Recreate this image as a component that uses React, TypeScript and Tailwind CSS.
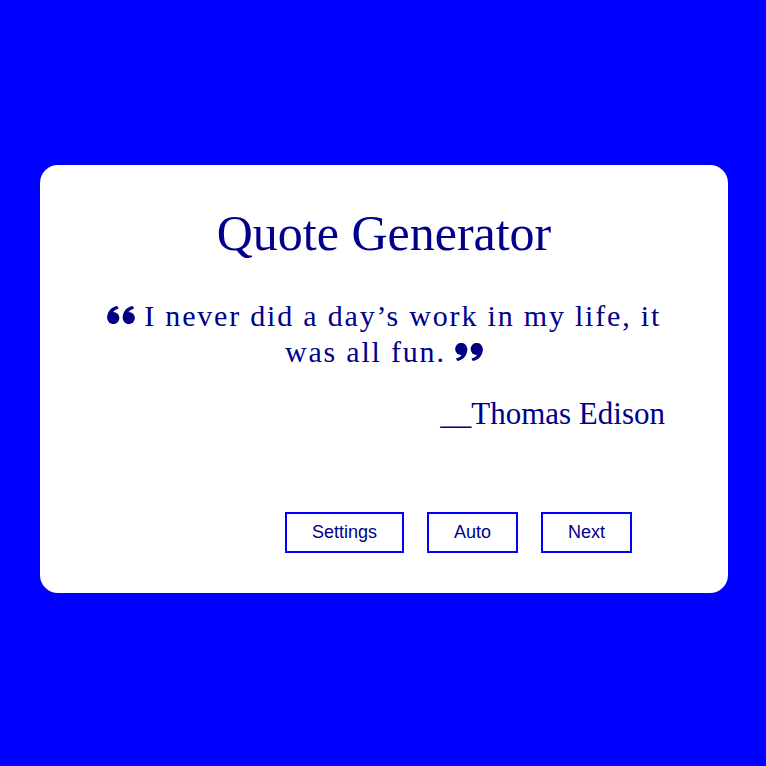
import React from "react";

function QuoteGlyph({ flip = false }: { flip?: boolean }) {
  const glyph = (dx: number) => (
    <g transform={`translate(${dx},0)`}>
      <circle cx="6.3" cy="12" r="6.1" />
      <path d="M0.2 12 C0.2 5.5 4 1.2 10.2 0 L11.6 2.4 C8 3.6 5.8 5.4 5.2 7.6 Z" />
    </g>
  );
  return (
    <svg
      width="28"
      height="18"
      viewBox="0 0 28 18"
      className={flip ? "inline-block align-[1px]" : "inline-block align-[2px]"}
      fill="#000080"
    >
      <g transform={flip ? "rotate(180 14 9)" : undefined}>
        {glyph(0)}
        {glyph(15.5)}
      </g>
    </svg>
  );
}

export default function App() {
  return (
    <div className="min-h-[766px] w-full bg-[#0000ff] pt-[165px] px-[40px] [font-family:'Liberation_Serif','Times_New_Roman',serif]">
      <div className="w-[688px] h-[428px] bg-white rounded-[18px] pt-[44px] pb-[40px] flex flex-col">
        <h1 className="text-center text-[50px] leading-[48px] text-[#00008b] font-normal">
          Quote Generator
        </h1>
        <div className="mt-[41px] px-[54px]">
          <p className="text-center text-[30px] leading-[36.4px] tracking-[1.8px] text-[#00008b]">
            <QuoteGlyph /> I never did a day’s work in my life, it was all fun.{" "}
            <QuoteGlyph flip />
          </p>
        </div>
        <div className="mt-[27px] pr-[63px] text-right text-[31px] leading-[31px] text-[#00008b]">
          __Thomas Edison
        </div>
        <div className="mt-auto flex justify-end gap-[23px] pr-[96px] [font-family:'Liberation_Sans',Arial,sans-serif]">
          <button className="border-2 border-[#0000ff] px-[25px] py-[8px] text-[18px] leading-[21px] text-[#00008b] bg-white">
            Settings
          </button>
          <button className="border-2 border-[#0000ff] px-[25px] py-[8px] text-[18px] leading-[21px] text-[#00008b] bg-white">
            Auto
          </button>
          <button className="border-2 border-[#0000ff] px-[25px] py-[8px] text-[18px] leading-[21px] text-[#00008b] bg-white">
            Next
          </button>
        </div>
      </div>
    </div>
  );
}
